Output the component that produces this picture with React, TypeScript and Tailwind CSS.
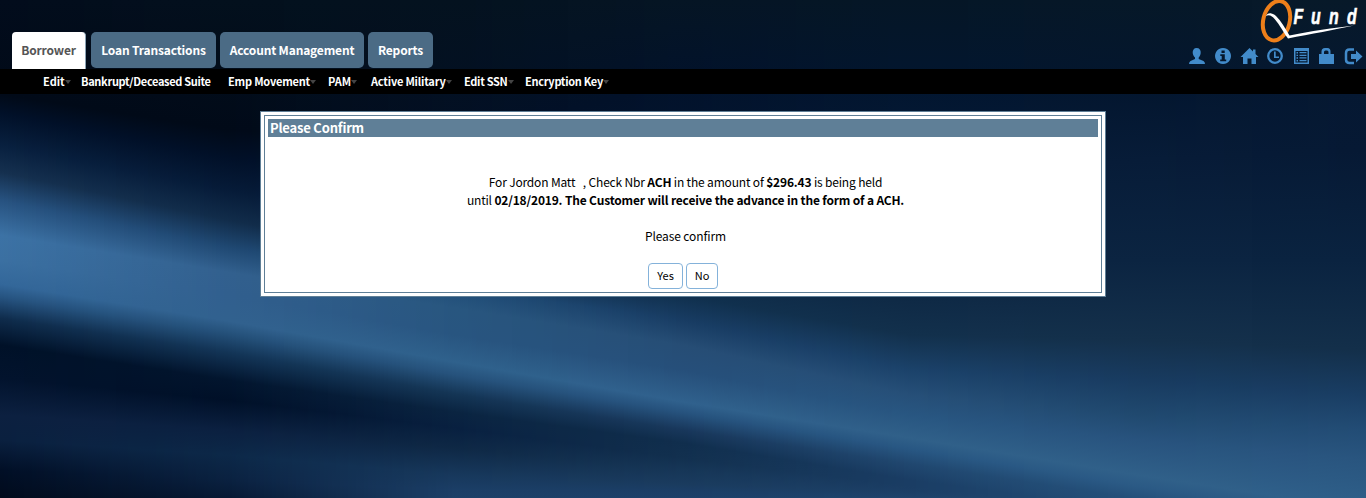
import React from "react";

type Row = [number, string][];

const XS = [0, 228, 455, 683, 910, 1138, 1366];

// Each column lists the same folds of cloth, from top to bottom.
const COLUMNS: Row[] = [
  [[0, "#020c1c"], [94, "#010a18"], [112, "#011028"], [145, "#08203f"], [172, "#15304f"], [200, "#275280"], [235, "#3c72a5"], [260, "#3b70a2"], [284, "#33679a"], [297, "#265380"], [318, "#0f2c4c"], [345, "#001128"], [378, "#02132d"], [415, "#0c2040"], [440, "#0a203f"], [470, "#010f26"], [498, "#010b1c"]],
  [[0, "#03101d"], [130, "#010a18"], [158, "#011028"], [190, "#061b38"], [220, "#112c4a"], [247, "#1f4872"], [272, "#32608e"], [294, "#315f8e"], [321, "#31618e"], [334, "#245079"], [352, "#133557"], [380, "#02152e"], [400, "#001028"], [430, "#0b2040"], [455, "#0c2848"], [480, "#0a2140"], [498, "#061934"]],
  [[0, "#04121f"], [140, "#020f24"], [180, "#03142e"], [225, "#071e3c"], [265, "#102c4a"], [288, "#204d78"], [308, "#28567f"], [335, "#285580"], [362, "#2f618c"], [375, "#26527c"], [394, "#143555"], [412, "#0a2441"], [428, "#082040"], [448, "#0e2845"], [475, "#17385c"], [490, "#1b3e66"], [498, "#1c4068"]],
  [[0, "#051524"], [80, "#02122b"], [180, "#03152f"], [240, "#081f3c"], [296, "#10304e"], [320, "#183c63"], [345, "#264d75"], [370, "#264f7a"], [402, "#30618d"], [413, "#26527d"], [430, "#18375b"], [443, "#102e4d"], [458, "#12304f"], [470, "#163657"], [484, "#1a3b5e"], [491, "#1b3e66"], [498, "#1c4069"]],
  [[0, "#051626"], [90, "#021630"], [180, "#061b38"], [260, "#0b223e"], [335, "#12304c"], [370, "#1b426a"], [395, "#264f78"], [415, "#285681"], [438, "#306089"], [449, "#285783"], [464, "#20476f"], [480, "#1a3d64"], [486, "#1a3d64"], [490, "#1b3e65"], [493, "#1c4067"], [496, "#1d426a"], [498, "#1e446c"]],
  [[0, "#061828"], [90, "#03162f"], [160, "#071c38"], [260, "#0b2441"], [340, "#14304b"], [380, "#183b60"], [415, "#20496f"], [440, "#28537e"], [475, "#306089"], [486, "#2b5a85"], [499, "#24507a"], [510, "#24507a"], [511, "#24507a"], [512, "#24507a"], [513, "#24507a"], [514, "#24507a"], [515, "#24507a"]],
  [[0, "#071929"], [90, "#051832"], [150, "#061934"], [260, "#0a2340"], [350, "#132f4a"], [395, "#193d63"], [430, "#224c75"], [460, "#29557f"], [510, "#2f608a"], [521, "#2b5a85"], [534, "#2a5780"], [535, "#2a5780"], [536, "#2a5780"], [537, "#2a5780"], [538, "#2a5780"], [539, "#2a5780"], [540, "#2a5780"]],
];

const STEP = 4;
const DEPTH = 540;
const channel = (hex: string, i: number) => parseInt(hex.slice(1 + i * 2, 3 + i * 2), 16);

function blend(x: number): Row {
  let i = 0;
  while (i < XS.length - 2 && x > XS[i + 1]) i++;
  const t = (x - XS[i]) / (XS[i + 1] - XS[i]);
  return COLUMNS[i].map(([y, color], k) => {
    const [y2, color2] = COLUMNS[i + 1][k];
    const rgb = [0, 1, 2].map((c) => Math.round(channel(color, c) * (1 - t) + channel(color2, c) * t));
    return [y * (1 - t) + y2 * t, `rgb(${rgb.join(",")})`];
  });
}

function Backdrop() {
  const strips = Array.from({ length: Math.ceil(1366 / STEP) }, (_, i) => i * STEP);
  return (
    <svg className="absolute inset-0 -z-10" width="1366" height="498" shapeRendering="crispEdges" aria-hidden="true">
      <defs>
        {strips.map((x) => (
          <linearGradient key={x} id={`fold${x}`} gradientUnits="userSpaceOnUse" x1="0" y1="0" x2="0" y2={DEPTH}>
            {blend(x + STEP / 2).map(([y, color], k) => (
              <stop key={k} offset={y / DEPTH} stopColor={color} />
            ))}
          </linearGradient>
        ))}
      </defs>
      {strips.map((x) => (
        <rect key={x} x={x} y="0" width={STEP} height="498" fill={`url(#fold${x})`} />
      ))}
    </svg>
  );
}

const LOGO_LETTERS: [string, number][] = [["F", 33.5], ["u", 51], ["n", 69], ["d", 87]];

function Logo() {
  return (
    <svg width="106" height="44" viewBox="0 0 106 44" className="block" role="img" aria-label="QFund">
      <ellipse cx="16.5" cy="20.700" rx="13.200" ry="20" fill="none" stroke="#ee7f1a" strokeWidth="4" transform="rotate(14 16.5 20.7)" />
      <path d="M6 16C7 12.4 12 12 16 16C21 21 25 28 29.500 35.500C50 31.500 74 27.800 94 25.600C76 29.500 50 34.500 28 38.500C22 30 18 22 13 17.200C10.500 15 8 14.500 6 16Z" fill="#fff" />
      <g fill="#fff" stroke="#fff" strokeWidth="0.6" fontFamily="Liberation Sans" fontSize="22" fontWeight="700" fontStyle="italic">
        {LOGO_LETTERS.map(([letter, x]) => (
          <text key={letter} transform={`translate(${x} 23.7) scale(.72 1)`}>{letter}</text>
        ))}
      </g>
    </svg>
  );
}

function Toolbar() {
  return (
    <svg width="178" height="17" viewBox="0 0 178 17" fill="#428bca" className="block" aria-hidden="true">
      <path d="M8.500 0C11.500 0 13 2 12.700 5C12.500 7.500 11.500 8.500 10.700 9.500V11L15.500 13Q17 14 17 16H1Q1 14 2.500 13L7 11V9.500C6 8.500 5 7.500 4.700 5C4.500 2 6 0 8.500 0Z" />
      <path fillRule="evenodd" d="M35 0a8 8 0 1 0 .01 0ZM33.500 2.500h3.200v2.400h-3.200ZM32.300 6.300h4.500v5.200h1.400v1.700h-6v-1.700h1.500v-3.500h-1.400Z" />
      <path d="M61.500 0L65 3.500V1.500H67.500V6L70.500 9H68V16H63.500V10.500H59.500V16H55V9H52.500Z" />
      <circle cx="87" cy="8" r="6.800" fill="none" stroke="#428bca" strokeWidth="2.300" />
      <path d="M86 3.500h1.700v5H91v1.600h-5Z" />
      <path fillRule="evenodd" d="M106 0h15v16h-15ZM107.500 3v11.500h12V3ZM108.500 4h1.500v1.500h-1.500ZM111.500 4h7v1.300h-7ZM108.500 6.700h1.500v1.400h-1.500ZM111.500 6.700h7v1.300h-7ZM108.500 9.300h1.500v1.400h-1.500ZM111.500 9.300h7v1.300h-7ZM108.500 12h1.500v1.400h-1.500ZM111.500 12h7v1.300h-7Z" />
      <path fillRule="evenodd" d="M131 6h2.500V3.500Q133.500 0 137 0h2.500Q142.500 0 142.500 3.500V6H146v10h-15ZM136 6h4.500V4Q140.500 2.500 139 2.500h-1.500Q136 2.500 136 4Z" />
      <path d="M166 1.500H161.500Q158 1.500 158 5V11.500Q158 15 161.500 15H166" fill="none" stroke="#428bca" strokeWidth="2.500" />
      <path d="M163 6h5V2.500l6.500 6-6.500 6V11H163Z" />
    </svg>
  );
}

const TABS = [
  { label: "Loan Transactions", box: "w-[125px]" },
  { label: "Account Management", box: "w-[144px]" },
  { label: "Reports", box: "w-[65px]" },
];

const MENU = [
  { label: "Edit", box: "w-[38px]", arrow: true },
  { label: "Bankrupt/Deceased Suite", box: "w-[147px] tracking-[-0.32px]", arrow: false },
  { label: "Emp Movement", box: "w-[100px] tracking-[-0.2px]", arrow: true },
  { label: "PAM", box: "w-[43px]", arrow: true },
  { label: "Active Military", box: "w-[93px] tracking-[-0.2px]", arrow: true },
  { label: "Edit SSN", box: "w-[61px] tracking-[-0.3px]", arrow: true },
  { label: "Encryption Key", box: "w-[90px] tracking-[-0.3px]", arrow: true },
];

export default function App() {
  return (
    <div className="relative isolate h-[498px] w-[1366px] overflow-hidden font-['Noto_Sans_CJK_SC',sans-serif] text-black">
      <Backdrop />
      <header className="flex h-[69px] justify-between">
        <nav className="flex items-end gap-1 pl-3 text-[12px] font-bold tracking-[-0.16px] text-white">
          <div className="mr-px flex h-[37px] w-[74px] items-center justify-center rounded-t-[4px] border-r border-[#8ba3b5] bg-white pb-px text-[#555]">Borrower</div>
          {TABS.map((t) => (
            <div key={t.label} className={`${t.box} mb-px flex h-9 items-center justify-center whitespace-nowrap rounded-[5px] bg-[#4b6b85]`}>{t.label}</div>
          ))}
        </nav>
        <div className="flex w-[178px] flex-col items-end">
          <div className="h-12"><Logo /></div>
          <Toolbar />
        </div>
      </header>
      <div className="flex h-[25px] items-center bg-black pl-[43px] text-[11px] font-bold text-white">
        {MENU.map((m) => (
          <div key={m.label} className={`${m.box} flex shrink-0 items-center whitespace-nowrap`}>
            {m.label}
            {m.arrow && <span className="h-0 w-0 border-x-[3.500px] border-t-4 border-x-transparent border-t-[#444]" />}
          </div>
        ))}
      </div>
      <main className="mx-auto mt-[17px] h-[186px] w-[846px] border border-[#5f7f97] bg-white p-[3px]">
        <div className="h-full border border-[#5f7f97] p-[3px]">
          <h1 className="h-[18px] bg-[#5f7f97] pl-0.5 text-[13px] font-bold leading-[18px] tracking-[-0.2px] text-white">Please Confirm</h1>
          <div className="pt-[36px] text-center text-[12px] leading-[18px]">
            <div className="pl-[5px] tracking-[-0.17px]">
              <p>For Jordon Matt &nbsp; , Check Nbr <b>ACH</b> in the amount of <b>$296.43</b> is being held</p>
              <p>until <b>02/18/2019. The Customer will receive the advance in the form of a ACH.</b></p>
              <p className="mt-[18px] tracking-[-0.1px]">Please confirm</p>
            </div>
            <div className="mt-[18px] flex justify-center gap-[3px] text-[11px]">
              <button className="h-[26px] w-[35px] rounded-[4px] border border-[#84b2da] pb-0.5">Yes</button>
              <button className="h-[26px] w-8 rounded-[4px] border border-[#84b2da] pb-0.5">No</button>
            </div>
          </div>
        </div>
      </main>
    </div>
  );
}
